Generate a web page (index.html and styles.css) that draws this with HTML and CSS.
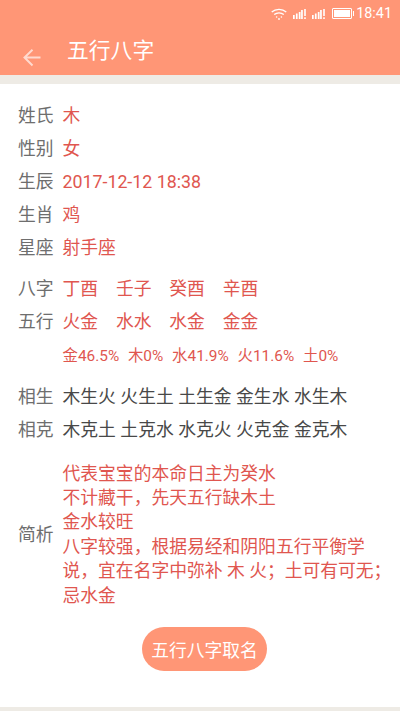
FILE: index.html
```html
<!DOCTYPE html>
<html lang="zh-CN">
<head>
    <meta charset="UTF-8">
    <meta name="viewport" content="width=device-width, initial-scale=1.0">
    <title>五行八字</title>
    <link rel="stylesheet" href="styles.css">
</head>
<body>
    <div class="header">
        <div class="status-bar">
            <svg class="icon-wifi" width="16" height="12" viewBox="0 0 16 12">
                <path d="M0.7 4 C4.8 0.4 11.2 0.4 15.3 4" />
                <path d="M3.2 6.6 C6 4.4 10 4.4 12.8 6.6" />
                <circle cx="5.6" cy="9" r="0.8" />
                <circle cx="10.4" cy="9" r="0.8" />
                <circle cx="8" cy="11" r="0.9" />
            </svg>
            <svg class="icon-signal" width="13" height="10" viewBox="0 0 13 10">
                <rect x="0" y="6" width="1.7" height="4" />
                <rect x="2.9" y="4.5" width="1.7" height="5.5" />
                <rect x="5.8" y="3" width="1.7" height="7" />
                <rect x="8.1" y="1" width="1.7" height="9" />
                <rect x="11.2" y="0" width="1.6" height="7" />
                <rect x="11.2" y="8.3" width="1.6" height="1.7" />
            </svg>
            <svg class="icon-signal" width="13" height="10" viewBox="0 0 13 10">
                <rect x="0" y="6" width="1.7" height="4" />
                <rect x="2.9" y="4.5" width="1.7" height="5.5" />
                <rect x="5.8" y="3" width="1.7" height="7" />
                <rect x="8.1" y="1" width="1.7" height="9" />
                <rect x="11.2" y="0" width="1.6" height="7" />
                <rect x="11.2" y="8.3" width="1.6" height="1.7" />
            </svg>
            <div class="battery"><div class="battery-fill"></div></div>
            <span class="clock">18:41</span>
        </div>
        <div class="toolbar">
            <svg class="icon-back" width="18" height="18" viewBox="0 0 18 18">
                <path d="M17.5 8.5 H1.5 M9.5 0.8 L1.5 8.5 L9.5 16.5" />
            </svg>
            <h1>五行八字</h1>
        </div>
    </div>
    <div class="divider"></div>

    <div class="content">
        <div class="group">
            <div class="row"><span class="label">姓氏</span><span class="value">木</span></div>
            <div class="row"><span class="label">性别</span><span class="value">女</span></div>
            <div class="row"><span class="label">生辰</span><span class="value">2017-12-12 18:38</span></div>
            <div class="row"><span class="label">生肖</span><span class="value">鸡</span></div>
            <div class="row"><span class="label">星座</span><span class="value">射手座</span></div>
        </div>

        <div class="group bazi">
            <div class="row">
                <span class="label">八字</span>
                <div class="pillars value"><span>丁酉</span><span>壬子</span><span>癸酉</span><span>辛酉</span></div>
            </div>
            <div class="row">
                <span class="label">五行</span>
                <div class="pillars value"><span>火金</span><span>水水</span><span>水金</span><span>金金</span></div>
            </div>
            <div class="row percents">
                <span class="label"></span>
                <div class="percent-list value"><span>金46.5%</span><span>木0%</span><span>水41.9%</span><span>火11.6%</span><span>土0%</span></div>
            </div>
        </div>

        <div class="group relations">
            <div class="row">
                <span class="label">相生</span>
                <div class="cycle"><span>木生火</span><span>火生土</span><span>土生金</span><span>金生水</span><span>水生木</span></div>
            </div>
            <div class="row">
                <span class="label">相克</span>
                <div class="cycle"><span>木克土</span><span>土克水</span><span>水克火</span><span>火克金</span><span>金克木</span></div>
            </div>
        </div>

        <div class="summary">
            <span class="label">简析</span>
            <div class="summary-text value">
                <p>代表宝宝的本命日主为癸水</p>
                <p>不计藏干，先天五行缺木土</p>
                <p>金水较旺</p>
                <p>八字较强，根据易经和阴阳五行平衡学说，宜在名字中弥补 木 火；土可有可无；忌水金</p>
            </div>
        </div>

        <div class="action">
            <button type="button">五行八字取名</button>
        </div>
    </div>
    <div class="footer-strip"></div>
</body>
</html>
```

FILE: styles.css
```css
:root {
    --primary-color: #ff9676;
    --strip-color: #eeebe5;
    --red-text: #e0564f;
    --label-text: #6e6e6e;
    --dark-text: #484848;
}

* {
    box-sizing: border-box;
    margin: 0;
    padding: 0;
}

html, body {
    height: 711px;
    overflow: hidden;
}

body {
    display: flex;
    flex-direction: column;
    background-color: white;
    font-family: "Roboto", "Noto Sans CJK SC", sans-serif;
    font-size: 17.8px;
    line-height: 24px;
}

.header {
    height: 75px;
    background-color: var(--primary-color);
    color: white;
}

.status-bar {
    height: 27px;
    display: flex;
    align-items: center;
    justify-content: flex-end;
    gap: 6px;
    padding-right: 8px;
}

.icon-wifi path {
    fill: none;
    stroke: white;
    stroke-width: 1.3;
}

.icon-wifi circle,
.icon-signal rect {
    fill: white;
}

.battery {
    position: relative;
    width: 20px;
    height: 11px;
    margin-left: 1px;
    margin-right: -1px;
    padding: 1px;
    border: 1px solid white;
    border-radius: 1px;
}

.battery::after {
    content: "";
    position: absolute;
    right: -3px;
    top: 2px;
    width: 1px;
    height: 5px;
    background-color: white;
}

.battery-fill {
    height: 100%;
    background-color: white;
}

.clock {
    margin-left: -1px;
    font-size: 14.4px;
}

.toolbar {
    height: 48px;
    display: flex;
    align-items: center;
}

.icon-back {
    margin-left: 22.5px;
    margin-top: 13px;
    opacity: 0.65;
}

.icon-back path {
    fill: none;
    stroke: white;
    stroke-width: 2;
}

h1 {
    margin-left: 26.5px;
    font-size: 21.8px;
    font-weight: 400;
}

.divider {
    height: 9px;
    background-color: var(--strip-color);
}

.content {
    flex: 1;
    padding: 15px 8px 0 18px;
}

.row {
    display: flex;
    align-items: center;
    height: 33px;
}

.label {
    width: 44.5px;
    flex-shrink: 0;
    color: var(--label-text);
}

.value {
    color: var(--red-text);
}

.bazi {
    margin-top: 8px;
}

.pillars {
    display: flex;
    gap: 17.8px;
}

.percents {
    font-size: 15.4px;
    height: 35px;
}

.percent-list {
    display: flex;
    gap: 8.8px;
}

.relations {
    margin-top: 7px;
    color: var(--dark-text);
}

.cycle {
    display: flex;
    gap: 4.5px;
}

.summary {
    margin-top: 15.5px;
    display: flex;
    align-items: center;
}

.summary-text {
    flex: 1;
    line-height: 24.4px;
}

.action {
    display: flex;
    justify-content: center;
    margin-top: 19.5px;
    padding-right: 1px;
}

button {
    width: 125px;
    height: 44px;
    background-color: var(--primary-color);
    color: white;
    border: none;
    border-radius: 22px;
    font-family: inherit;
    font-size: 17.8px;
}

.footer-strip {
    height: 4px;
    background-color: var(--strip-color);
}
```
